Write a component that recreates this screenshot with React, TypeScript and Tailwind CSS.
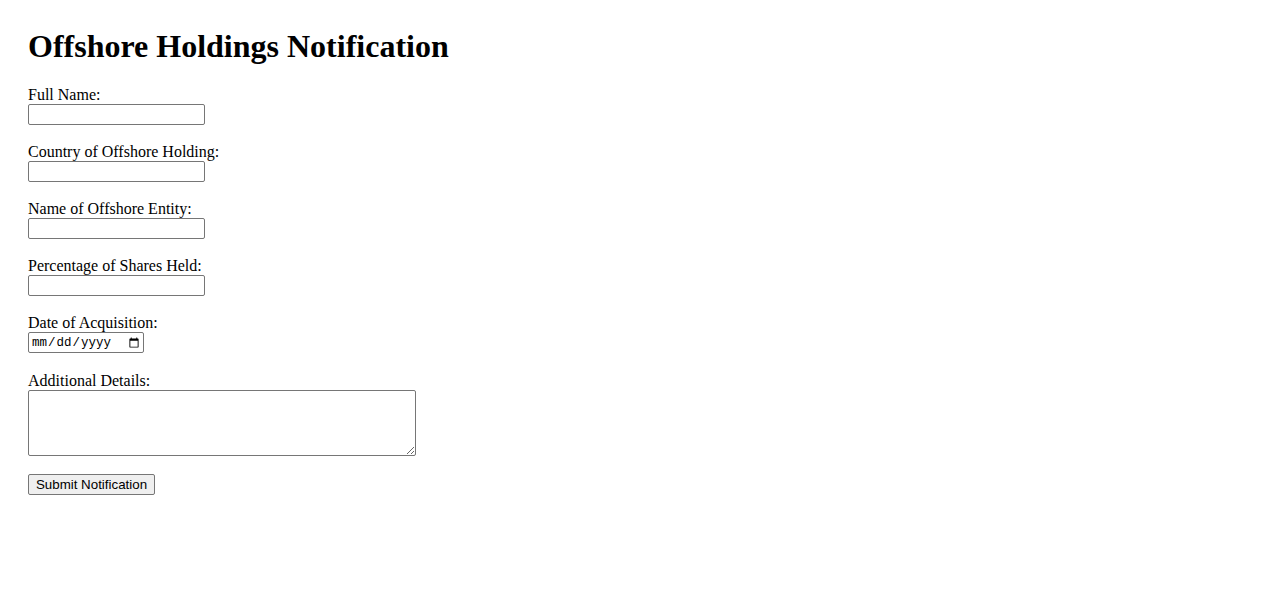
import { useState } from "react";

const fields = [
  { id: "fullName", label: "Full Name:" },
  { id: "country", label: "Country of Offshore Holding:" },
  { id: "entity", label: "Name of Offshore Entity:" },
  { id: "shares", label: "Percentage of Shares Held:" },
];

export default function App() {
  const [values, setValues] = useState<Record<string, string>>({});

  return (
    <div className="min-h-screen bg-white px-[28px] pt-[28px] text-black font-['Liberation_Serif',serif]">
      <h1 className="text-[32px] font-bold leading-[37px] mb-[21px]">Offshore Holdings Notification</h1>
      <form onSubmit={(e) => e.preventDefault()} className="flex flex-col items-start">
        {fields.map((f) => (
          <div key={f.id} className="flex flex-col items-start mb-[18px]">
            <label htmlFor={f.id} className="text-[16px] leading-[18px]">
              {f.label}
            </label>
            <input
              id={f.id}
              type="text"
              value={values[f.id] ?? ""}
              onChange={(e) => setValues({ ...values, [f.id]: e.target.value })}
              className="w-[177px] h-[21px] border border-[#767676] rounded-[2px] px-[2px] text-[13px] font-['Liberation_Sans',sans-serif] bg-white"
            />
          </div>
        ))}

        <div className="flex flex-col items-start mb-[19px]">
          <label htmlFor="date" className="text-[16px] leading-[18px]">
            Date of Acquisition:
          </label>
          <input
            id="date"
            type="date"
            className="w-[116px] h-[21px] border border-[#767676] rounded-[2px] pl-[2px] pr-[1px] pt-[1px] text-[12.5px] font-['Liberation_Mono',monospace] bg-white"
          />
        </div>

        <div className="flex flex-col items-start mb-[18px]">
          <label htmlFor="details" className="text-[16px] leading-[18px]">
            Additional Details:
          </label>
          <textarea
            id="details"
            className="w-[388px] h-[66px] border border-[#767676] rounded-[2px] p-[2px] text-[13px] font-['Liberation_Mono',monospace] bg-white"
          />
        </div>

        <button
          type="submit"
          className="h-[21px] w-[127px] border border-[#767676] rounded-[2px] bg-[#efefef] text-[13.33px] leading-none font-['Liberation_Sans',sans-serif] text-black"
        >
          Submit Notification
        </button>
      </form>
    </div>
  );
}
